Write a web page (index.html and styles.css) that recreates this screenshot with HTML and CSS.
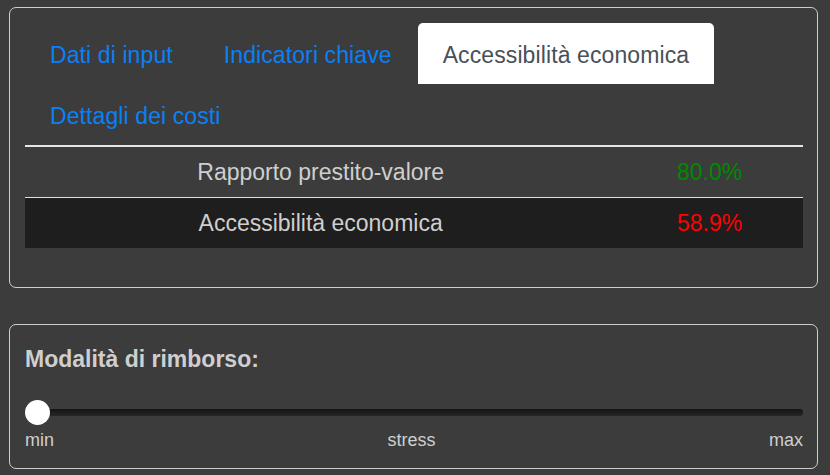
FILE: index.html
```html
<!DOCTYPE html>
<html lang="it">
<head>
    <meta charset="UTF-8">
    <meta name="viewport" content="width=device-width, initial-scale=1.0">
    <title>Accessibilità economica</title>
    <link rel="stylesheet" href="styles.css">
</head>
<body>
    <div class="card">
        <ul class="tabs">
            <li><a href="#" class="tab">Dati di input</a></li>
            <li><a href="#" class="tab">Indicatori chiave</a></li>
            <li><a href="#" class="tab active">Accessibilità economica</a></li>
            <li><a href="#" class="tab">Dettagli dei costi</a></li>
        </ul>
        <table class="results">
            <tr>
                <td class="label">Rapporto prestito-valore</td>
                <td class="value good">80.0%</td>
            </tr>
            <tr class="dark">
                <td class="label">Accessibilità economica</td>
                <td class="value bad">58.9%</td>
            </tr>
        </table>
    </div>

    <div class="card card-slider">
        <label for="mode" class="slider-title">Modalità di rimborso:</label>
        <input type="range" id="mode" min="0" max="2" value="0" class="slider">
        <div class="slider-labels">
            <span>min</span>
            <span>stress</span>
            <span>max</span>
        </div>
    </div>
</body>
</html>
```

FILE: styles.css
```css
body {
    font-family: "Liberation Sans", Arial, sans-serif;
    margin: 0;
    padding: 7px 12px 0 9px;
    background-color: #3c3c3c;
    color: #cfcfcf;
}

.card {
    border: 1px solid #cfcfcf;
    border-radius: 7px;
    padding: 15px 14px 39px 15px;
}

/* Onglets */
.tabs {
    list-style: none;
    margin: 0;
    padding: 0;
    display: flex;
    flex-wrap: wrap;
    border-bottom: 2px solid #e6e6e6;
}

.tabs li {
    margin-right: 1px;
}

.tab {
    display: block;
    padding: 18px 25px 14px;
    line-height: 29px;
    font-size: 23px;
    letter-spacing: 0.1px;
    color: #0a80f7;
    text-decoration: none;
    border-radius: 5px 5px 0 0;
}

.tab.active {
    background-color: #fff;
    color: #495057;
}

/* Tabella risultati */
.results {
    width: 100%;
    border-collapse: collapse;
    font-size: 23px;
}

.results td {
    height: 50px;
    padding: 0;
    text-align: center;
}

.results tr + tr td {
    border-top: 1px solid #e0e0e0;
}

.results .label {
    width: 76%;
}

.results .dark {
    background-color: #1e1e1e;
}

.good {
    color: #008a00;
}

.bad {
    color: #ff0000;
}

/* Slider */
.card-slider {
    margin-top: 36px;
    padding: 16px 14px 16px 15px;
}

.slider-title {
    display: block;
    font-size: 23px;
    font-weight: bold;
    line-height: 36px;
    margin-bottom: 23px;
}

.slider {
    -webkit-appearance: none;
    appearance: none;
    display: block;
    width: 100%;
    height: 25px;
    margin: 0;
    background: transparent;
}

.slider::-webkit-slider-runnable-track {
    height: 7px;
    border-radius: 3px;
    background: linear-gradient(#151515, #262626);
}

.slider::-webkit-slider-thumb {
    -webkit-appearance: none;
    width: 25px;
    height: 25px;
    margin-top: -9px;
    border-radius: 50%;
    background: #fff;
    border: none;
}

.slider-labels {
    display: flex;
    justify-content: space-between;
    font-size: 18px;
    line-height: 24px;
    margin-top: 3px;
}
```
